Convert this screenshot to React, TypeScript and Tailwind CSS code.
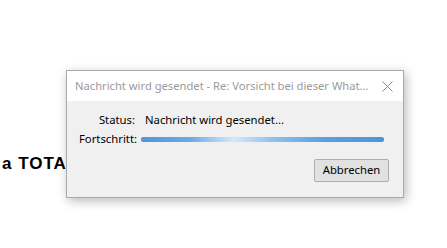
import React from "react";

export default function App() {
  return (
    <div className="relative w-[447px] h-[248px] bg-white overflow-hidden font-['Noto_Sans',sans-serif]">
      {/* page behind the dialog */}
      <div className="pt-[151px] pl-[2px]">
        <span className="font-['Liberation_Sans',sans-serif] font-bold text-[17px] tracking-[1px] text-black leading-[22px]">
          a TOTAL
        </span>
      </div>

      {/* Sending dialog */}
      <div className="absolute left-[66px] top-[70px] w-[338px] h-[128px] border border-[#a9a9a9] bg-[#f0f0f0] shadow-[2px_3px_10px_rgba(0,0,0,0.28)] flex flex-col">
        <div className="h-[30px] bg-white flex items-center justify-between pl-[8px] pr-[10px]">
          <span className="text-[11.2px] text-[#9a9a9a] whitespace-nowrap">
            Nachricht wird gesendet - Re: Vorsicht bei dieser What...
          </span>
          <svg width="11" height="11" viewBox="0 0 11 11" className="text-[#8a8a8a]">
            <path d="M0.5 0.5 L10.5 10.5 M10.5 0.5 L0.5 10.5" stroke="currentColor" strokeWidth="1" fill="none" />
          </svg>
        </div>

        <div className="flex-1 flex flex-col pt-[9px] pl-[12px] pr-[14px]">
          <div className="flex items-center h-[20px] text-[11.3px] text-black">
            <span className="w-[56px] text-right">Status:</span>
            <span className="ml-[10px]">Nachricht wird gesendet...</span>
          </div>
          <div className="flex items-center h-[18px] text-[11.3px] text-black">
            <span className="w-[56px] text-right">Fortschritt:</span>
            <div className="ml-[6px] mr-[5px] flex-1 h-[5px] rounded-[2px] bg-[linear-gradient(90deg,#4f97dd_0%,#6aa9e4_20%,#d4e8f8_38%,#8dc0ec_55%,#5aa0e2_75%,#4b95de_100%)]" />
          </div>
          <div className="flex justify-end mt-[11px]">
            <button className="w-[75px] h-[23px] border border-[#adadad] bg-[#e1e1e1] rounded-[2px] text-[11.3px] text-black">
              Abbrechen
            </button>
          </div>
        </div>
      </div>
    </div>
  );
}
